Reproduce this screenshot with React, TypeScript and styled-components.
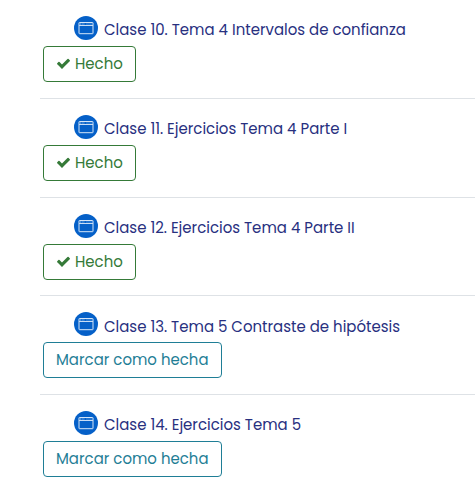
import React from "react";
import styled, { createGlobalStyle } from "styled-components";

const GlobalStyle = createGlobalStyle`
  * { box-sizing: border-box; }
  body {
    margin: 0;
    background: #fff;
    overflow: hidden;
    font-family: Poppins, Inter, "Open Sans", sans-serif;
  }
`;

const List = styled.ul`
  list-style: none;
  margin: 0;
  padding: 0 0 0 40px;
  height: 489px;
  overflow: hidden;
`;

const Row = styled.li`
  height: 98.8px;
  padding: 16px 0 0 3px;
  border-bottom: 1px solid #dee2e6;
  &:last-child { border-bottom: 0; }
`;

const Title = styled.a`
  display: flex;
  align-items: center;
  gap: 6px;
  height: 24px;
  margin-left: 31px;
  color: #28307f;
  font-size: 14.96px;
  line-height: 24px;
  white-space: nowrap;
  text-decoration: none;
`;

const Text = styled.span`
  display: block;
  padding-top: 1px;
  transform: scaleY(1.07);
`;

const Label = styled(Text)`
  padding-top: 3.8px;
`;

const Status = styled.button<{ $done: boolean }>`
  display: flex;
  align-items: center;
  width: ${(p) => (p.$done ? 93 : 179)}px;
  height: 36px;
  margin-top: 6px;
  padding: 0 0 1px 12px;
  border: 1px solid ${(p) => (p.$done ? "#357a38" : "#1f7e96")};
  border-radius: 4px;
  background: #fff;
  color: ${(p) => (p.$done ? "#357a38" : "#1f7e96")};
  font: inherit;
  font-size: 14.96px;
  white-space: nowrap;
`;

const Check = styled.svg`
  flex: none;
  width: 15px;
  height: 15px;
  margin-right: 4px;
`;

const items = [
  { title: "Clase 10. Tema 4 Intervalos de confianza", done: true },
  { title: "Clase 11. Ejercicios Tema 4 Parte I", done: true },
  { title: "Clase 12. Ejercicios Tema 4 Parte II", done: true },
  { title: "Clase 13. Tema 5 Contraste de hipótesis", done: false },
  { title: "Clase 14. Ejercicios Tema 5", done: false },
];

function WindowIcon() {
  return (
    <svg width="24" height="24" viewBox="0 0 24 24" fill="none">
      <circle cx="12" cy="12" r="12" fill="#0560c8" />
      <rect x="5" y="6.5" width="14" height="11.2" rx=".4" stroke="#d5e5f7" />
      <path d="M5 9.5H19" stroke="#c8ddf5" />
      <path d="M6 8H11" stroke="#9cc2ec" strokeDasharray="1 .7" />
      <path d="M12 8H18" stroke="#4389d8" />
    </svg>
  );
}

export default function App() {
  return (
    <>
      <GlobalStyle />
      <List>
        {items.map((item) => (
          <Row key={item.title}>
            <Title>
              <WindowIcon />
              <Label>{item.title}</Label>
            </Title>
            <Status $done={item.done}>
              {item.done && (
                <Check viewBox="0 0 1792 1792" fill="currentColor">
                  <path d="M1671 566q0 40-28 68l-724 724-136 136q-28 28-68 28t-68-28l-136-136-362-362q-28-28-28-68t28-68l136-136q28-28 68-28t68 28l294 295 656-657q28-28 68-28t68 28l136 136q28 28 28 68z" />
                </Check>
              )}
              <Text>{item.done ? "Hecho" : "Marcar como hecha"}</Text>
            </Status>
          </Row>
        ))}
      </List>
    </>
  );
}
